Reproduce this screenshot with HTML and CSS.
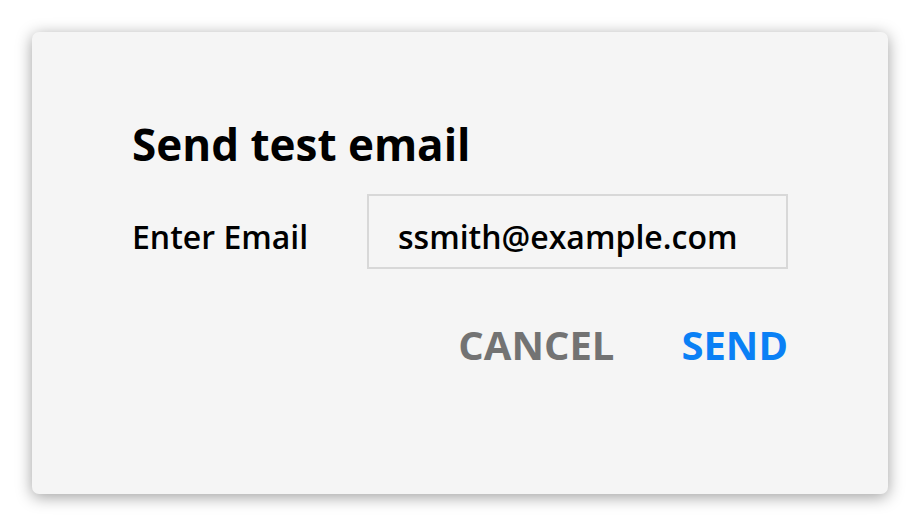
FILE: index.html
```
<!DOCTYPE html>
<html lang="en">
<head>
    <meta charset="UTF-8">
    <meta name="viewport" content="width=device-width, initial-scale=1.0">
    <title>Send test email</title>
    <link rel="stylesheet" href="styles.css">
</head>
<body>
    <div class="dialog">
        <h2 class="dialog-title">Send test email</h2>
        <form class="dialog-form">
            <div class="field-row">
                <label for="testEmail" class="field-label">Enter Email</label>
                <input type="email" id="testEmail" class="field-input" value="ssmith@example.com">
            </div>
            <div class="dialog-actions">
                <button type="button" class="action-button cancel">CANCEL</button>
                <button type="submit" class="action-button send">SEND</button>
            </div>
        </form>
    </div>
</body>
</html>
```

FILE: styles.css
```
/* Global Styles */
body {
    margin: 0;
    padding: 32px;
    background-color: #ffffff;
    font-family: 'Open Sans', 'Liberation Sans', sans-serif;
    color: #000000;
}

/* Dialog card */
.dialog {
    box-sizing: border-box;
    width: 856px;
    height: 462px;
    padding: 82px 100px 0 100px;
    background-color: #f5f5f5;
    border-radius: 7px;
    box-shadow: 0 3px 16px rgba(0, 0, 0, 0.38);
}

.dialog-title {
    margin: 0 0 20px 0;
    font-size: 44px;
    font-weight: 700;
    line-height: 60px;
}

/* Form row */
.field-row {
    display: flex;
    align-items: center;
}

.field-label {
    width: 236px;
    padding-top: 10px;
    font-size: 32px;
    font-weight: 600;
}

.field-input {
    box-sizing: border-box;
    width: 421px;
    height: 75px;
    padding: 10px 29px 0 29px;
    border: 2px solid #d8d8d8;
    background-color: #f5f5f5;
    font-family: inherit;
    font-size: 32px;
    font-weight: 600;
    color: #000000;
    outline: none;
}

/* Buttons */
.dialog-actions {
    display: flex;
    justify-content: flex-end;
    gap: 67px;
    margin-top: 48px;
}

.action-button {
    padding: 0;
    border: none;
    background: none;
    font-family: inherit;
    font-size: 40px;
    font-weight: 700;
    line-height: 56px;
    cursor: pointer;
}

.action-button.cancel {
    color: #737373;
}

.action-button.send {
    color: #0a80f5;
}
```
